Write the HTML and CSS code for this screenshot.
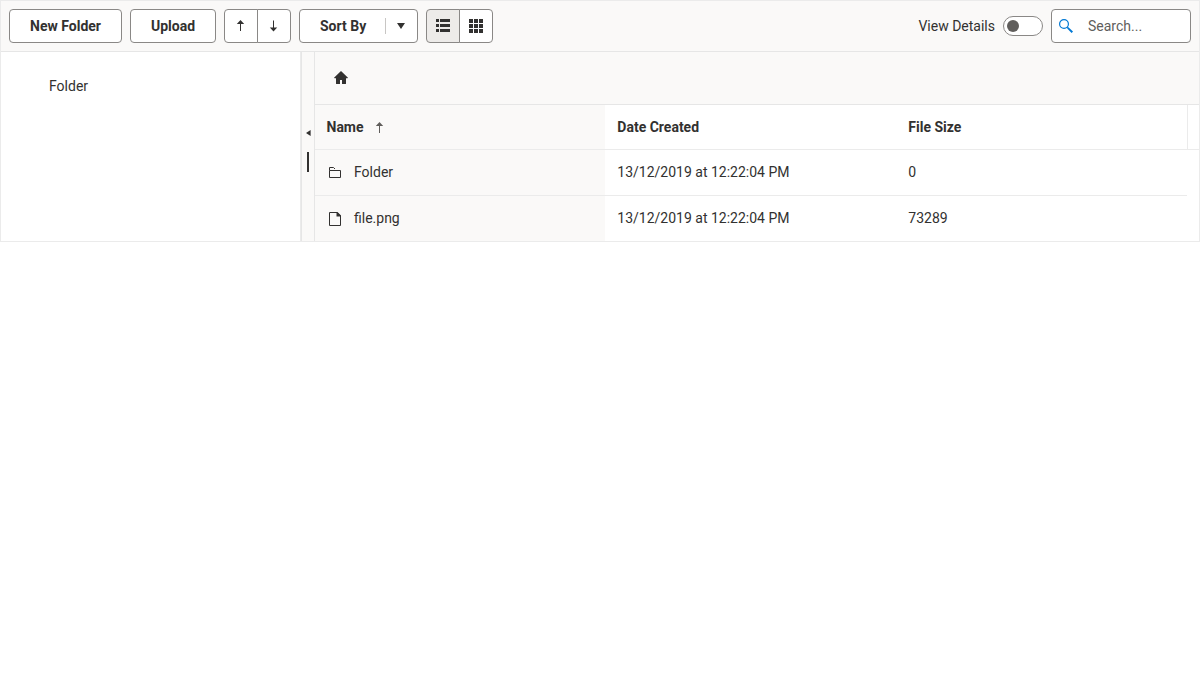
FILE: index.html
```html
<!DOCTYPE html>
<html lang="en">
<head>
<meta charset="utf-8">
<title>File Manager</title>
<link rel="stylesheet" href="styles.css">
</head>
<body>
<div class="filemanager">
  <header class="toolbar">
    <button class="button new-folder">New Folder</button>
    <button class="button upload">Upload</button>
    <div class="button-group">
      <button class="button icon-button" aria-label="Ascending"><svg class="icon" viewBox="0 0 16 16"><path d="M7.5 2l3.7 4H8v7H7V6H3.800z"/></svg></button>
      <button class="button icon-button" aria-label="Descending"><svg class="icon" viewBox="0 0 16 16"><path d="M7.5 13.500l3.700-4H8v-7H7v7H3.800z"/></svg></button>
    </div>
    <button class="button sort-by"><span class="sort-label">Sort By</span><span class="sort-caret"><svg class="icon" viewBox="0 0 16 16"><path d="M4 5h8l-4 6z"/></svg></span></button>
    <div class="button-group">
      <button class="button icon-button selected" aria-label="List view"><svg class="icon" viewBox="0 0 16 16" shape-rendering="crispEdges"><path d="M1 1h3v3H1zM5 1h10v3H5zM1 6h3v3H1zM5 6h10v3H5zM1 11h3v3H1zM5 11h10v3H5z"/></svg></button>
      <button class="button icon-button" aria-label="Grid view"><svg class="icon" viewBox="0 0 16 16" shape-rendering="crispEdges"><path d="M1 1h4v4H1zM6 1h4v4H6zM11 1h4v4h-4zM1 6h4v4H1zM6 6h4v4H6zM11 6h4v4h-4zM1 11h4v4H1zM6 11h4v4H6zM11 11h4v4h-4z"/></svg></button>
    </div>
    <span class="spacer"></span>
    <span class="switch-label">View Details</span>
    <span class="switch"><span class="thumb"></span></span>
    <div class="search">
      <svg class="icon search-icon" viewBox="0 0 16 16"><path fill="none" stroke="currentColor" stroke-width="1.2" d="M10.400 6a4.400 4.400 0 1 1-8.800 0a4.400 4.400 0 1 1 8.800 0z"/><path d="M8.800 9.700l.9-.9 1.300.9 4 3.900-1.400 1.400-3.900-4z"/></svg>
      <span>Search...</span>
    </div>
  </header>
  <div class="content">
    <nav class="tree"><div class="tree-item">Folder</div></nav>
    <div class="splitbar">
      <svg class="collapse" viewBox="0 0 5 8"><path d="M0 4l4.600-3v6z"/></svg>
      <span class="handle"></span>
    </div>
    <main class="view">
      <div class="breadcrumb"><svg class="icon" viewBox="0 0 16 16"><path d="M8 1l7 6.700-.6.6H13V13.400q0 .6-.6.6H9V10H7v4H3.600q-.6 0-.6-.6V8.300H1.600L1 7.700z"/></svg></div>
      <div class="row head">
        <div class="cell name">Name<svg class="icon sort-icon" viewBox="0 0 16 16"><path d="M7.500 2l3.700 4H8v7H7V6H3.800z"/></svg></div>
        <div class="cell">Date Created</div>
        <div class="cell">File Size</div>
        <div class="gutter"></div>
      </div>
      <div class="row">
        <div class="cell name"><svg class="icon item-icon" viewBox="0 0 16 16"><path fill="none" stroke="currentColor" d="M2.500 5.500h11v7h-11zM2.500 5.500v-3h4l1.500 1.500"/></svg>Folder</div>
        <div class="cell">13/12/2019 at 12:22:04 PM</div>
        <div class="cell">0</div>
      </div>
      <div class="row last">
        <div class="cell name"><svg class="icon item-icon" viewBox="0 0 16 16"><path fill="none" stroke="currentColor" d="M2.500 1.500h7.500l3.500 3.500v9.500h-11z"/><path d="M9.500 1h1l3.500 3.500v1H9.500z"/></svg>file.png</div>
        <div class="cell">13/12/2019 at 12:22:04 PM</div>
        <div class="cell">73289</div>
      </div>
    </main>
  </div>
</div>
</body>
</html>
```

FILE: styles.css
```css
* { box-sizing: border-box; }
body {
  margin: 0;
  background: #fff;
  color: #323130;
  font: 14px/20px Roboto, "Liberation Sans", sans-serif;
}
.filemanager {
  width: 1200px;
  height: 242px;
  border: 1px solid #ebebeb;
  display: flex;
  flex-direction: column;
}
.icon { display: block; flex: none; width: 16px; height: 16px; fill: currentColor; }
.toolbar {
  height: 51px;
  flex: none;
  display: flex;
  align-items: center;
  gap: 8px;
  padding: 0 8px;
  background: #faf9f8;
  border-bottom: 1px solid #e6e6e6;
}
.button {
  height: 34px;
  padding: 0;
  border: 1px solid #8a8886;
  border-radius: 4px;
  background: #fff;
  color: inherit;
  font: inherit;
  font-weight: 700;
  display: flex;
  align-items: center;
  justify-content: center;
}
.new-folder { width: 113px; }
.upload { width: 86px; }
.button-group { display: flex; }
.icon-button { width: 34px; }
.icon-button:first-child { border-radius: 4px 0 0 4px; }
.icon-button:last-child { border-radius: 0 4px 4px 0; margin-left: -1px; }
.selected { background: #edebe9; }
.sort-by { width: 119px; justify-content: flex-start; padding-left: 20px; }
.sort-label { width: 65px; text-align: left; }
.sort-caret { height: 16px; border-left: 1px solid #c8c6c4; padding-left: 7px; }
.spacer { flex: 1; }
.switch {
  width: 40px;
  height: 20px;
  border: 1px solid #8a8886;
  border-radius: 10px;
  background: #fff;
  padding: 3px;
}
.thumb { display: block; width: 12px; height: 12px; border-radius: 50%; background: #605e5c; }
.search {
  width: 140px;
  height: 34px;
  border: 1px solid #8a8886;
  border-radius: 4px;
  background: #fff;
  color: #605e5c;
  display: flex;
  align-items: center;
  padding-left: 6px;
  gap: 14px;
}
.search-icon { color: #0078d4; }
.content { display: flex; flex: 1; }
.tree { width: 300px; border-right: 1px solid #ebebeb; padding: 24px 0 0 48px; }
.splitbar {
  width: 14px;
  background: #faf9f8;
  border-left: 1px solid #e6e6e6;
  border-right: 1px solid #e6e6e6;
  display: flex;
  flex-direction: column;
  align-items: center;
  padding-top: 77px;
}
.collapse { width: 5px; height: 8px; fill: #323130; }
.handle { width: 2px; height: 20px; background: #323130; margin-top: 15px; }
.view { flex: 1; }
.breadcrumb {
  height: 53px;
  background: #faf9f8;
  border-bottom: 1px solid #e6e6e6;
  padding: 18px;
}
.row { display: flex; width: 872px; height: 46px; border-bottom: 1px solid #ebebeb; }
.head { width: 884px; height: 45px; font-weight: 700; }
.last { height: 45px; border-bottom: 0; }
.cell { width: 291px; padding: 0 0 1px 12.300px; display: flex; align-items: center; }
.head .cell { padding-bottom: 0; }
.name { width: 290px; padding-left: 12px; background: #faf9f8; }
.head .name { padding-left: 11.500px; }
.gutter { width: 12px; border-left: 1px solid #ebebeb; }
.sort-icon { margin: 2px 0 0 8.200px; color: #605e5c; }
.item-icon { margin: 2px 11px 0 0; }
```
